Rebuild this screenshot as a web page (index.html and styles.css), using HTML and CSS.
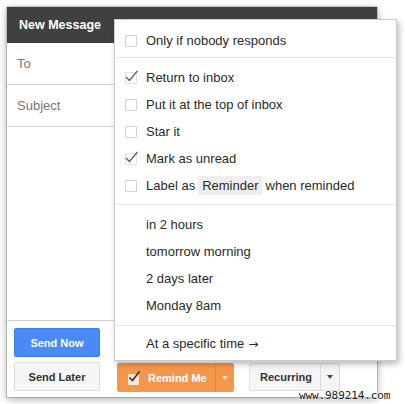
FILE: index.html
```html
<!DOCTYPE html>
<html>
<head>
<meta charset="utf-8">
<link rel="stylesheet" href="styles.css">
</head>
<body>
<div class="page">
  <div class="compose">
    <div class="compose-header">New Message</div>
    <div class="field">To</div>
    <div class="field">Subject</div>
    <div class="compose-body"></div>
    <div class="compose-footer">
      <div class="send-col">
        <div class="btn btn-primary">Send Now</div>
        <div class="btn btn-default">Send Later</div>
      </div>
      <div class="split split-orange">
        <span class="split-main">
          <span class="mini-check">
            <svg width="14" height="14" viewBox="0 0 14 14"><path d="M1.5 7.5 L4.5 10.5 L11.5 1.5" fill="none" stroke="#3d3028" stroke-width="1.7"/></svg>
          </span>
          Remind Me
        </span>
        <span class="split-arrow"><span class="tri tri-light"></span></span>
      </div>
      <div class="split split-gray">
        <span class="split-main">Recurring</span>
        <span class="split-arrow"><span class="tri tri-dark"></span></span>
      </div>
    </div>
  </div>

  <div class="menu">
    <div class="menu-section sec-1">
      <div class="item"><span class="cb"></span>Only if nobody responds</div>
    </div>
    <div class="menu-section sec-2">
      <div class="item"><span class="cb checked"><svg width="14" height="14" viewBox="0 0 14 14"><path d="M1 7 L4.5 10.5 L12.5 0.8" fill="none" stroke="#5a5a5a" stroke-width="1.3"/></svg></span>Return to inbox</div>
      <div class="item"><span class="cb"></span>Put it at the top of inbox</div>
      <div class="item"><span class="cb"></span>Star it</div>
      <div class="item"><span class="cb checked"><svg width="14" height="14" viewBox="0 0 14 14"><path d="M1 7 L4.5 10.5 L12.5 0.8" fill="none" stroke="#5a5a5a" stroke-width="1.3"/></svg></span>Mark as unread</div>
      <div class="item"><span class="cb"></span>Label as<span class="chip">Reminder</span>when reminded</div>
    </div>
    <div class="menu-section sec-3">
      <div class="item plain">in 2 hours</div>
      <div class="item plain">tomorrow morning</div>
      <div class="item plain">2 days later</div>
      <div class="item plain">Monday 8am</div>
    </div>
    <div class="menu-section sec-4">
      <div class="item plain">At a specific time <span class="arrow">→</span></div>
    </div>
  </div>

  <div class="watermark">www.989214.com</div>
</div>
</body>
</html>
```

FILE: styles.css
```css
* { box-sizing: border-box; }

html, body {
  margin: 0;
  padding: 0;
  background: #ffffff;
}

body {
  font-family: "Liberation Sans", Arial, sans-serif;
  font-size: 13px;
  color: #333;
}

.page {
  position: relative;
  width: 405px;
  height: 404px;
  padding: 7px;
  overflow: hidden;
}

.compose {
  width: 370px;
  height: 390px;
  display: flex;
  flex-direction: column;
  background: #fff;
  box-shadow: 0 0 0 1px rgba(0,0,0,0.16), 0 2px 8px rgba(0,0,0,0.35);
}

.compose-header {
  height: 36px;
  flex: none;
  display: flex;
  align-items: center;
  padding-left: 12px;
  background: #404040;
  color: #fff;
  font-weight: bold;
  font-size: 12.5px;
}

.field {
  height: 42px;
  flex: none;
  display: flex;
  align-items: center;
  padding-left: 10px;
  border-bottom: 1px solid #d4d4d4;
  color: #777;
  font-size: 13px;
}

.compose-body {
  flex: 1;
  border-bottom: 1px solid #cfcfcf;
}

.compose-footer {
  height: 76px;
  flex: none;
  display: flex;
  align-items: flex-end;
  padding: 7px 0 5px 7px;
}

.send-col {
  display: flex;
  flex-direction: column;
  gap: 5px;
  width: 86px;
  margin-bottom: 1px;
}

.btn {
  height: 29px;
  display: flex;
  align-items: center;
  justify-content: center;
  border-radius: 2px;
  font-size: 11px;
  font-weight: bold;
}

.btn-primary {
  background: #4a8af4;
  border: 1px solid #3d7de8;
  color: #fff;
}

.btn-default {
  background: #f5f5f5;
  border: 1px solid #dcdcdc;
  color: #333;
}

.split {
  height: 29px;
  display: flex;
  align-items: stretch;
  border-radius: 2px;
  font-size: 11px;
  font-weight: bold;
}

.split-orange {
  width: 117px;
  margin-left: 17px;
  background: #f5974a;
  color: #fff;
}

.split-gray {
  width: 91px;
  margin-left: 15px;
  margin-bottom: 1px;
  height: 28px;
  background: #f5f5f5;
  border: 1px solid #dcdcdc;
  color: #333;
}

.split-main {
  flex: 1;
  display: flex;
  align-items: center;
  padding-left: 11px;
}

.split-gray .split-main {
  padding-left: 10px;
}

.split-arrow {
  width: 19px;
  display: flex;
  align-items: center;
  justify-content: center;
}

.split-orange .split-arrow {
  border-left: 1px solid rgba(160, 80, 20, 0.18);
}

.split-gray .split-arrow {
  border-left: 1px solid #dcdcdc;
}

.tri {
  width: 0;
  height: 0;
  border-left: 3.5px solid transparent;
  border-right: 3.5px solid transparent;
}

.tri-light { border-top: 4px solid #fbe0c8; }
.tri-dark { border-top: 4px solid #444; }

.mini-check {
  position: relative;
  width: 11px;
  height: 11px;
  margin-right: 9px;
  margin-top: 3px;
  background: #fbe6d2;
  border-radius: 1px;
}

.mini-check svg {
  position: absolute;
  left: 0;
  top: -4px;
}

.menu {
  position: absolute;
  left: 114px;
  top: 19px;
  width: 283px;
  background: #fff;
  border: 1px solid #cdcdcd;
  box-shadow: 2px 3px 6px rgba(0,0,0,0.28);
}

.menu-section + .menu-section {
  border-top: 1px solid #e6e6e6;
}

.sec-1 { padding: 7px 0 3px; }
.sec-2 { padding: 6px 0 5px; }
.sec-3 { padding: 6px 0 6px; }
.sec-4 { padding: 4px 0 3px; }

.item {
  height: 27px;
  display: flex;
  align-items: center;
  padding-left: 10px;
  color: #2a2a2a;
  white-space: nowrap;
}

.item.plain {
  padding-left: 31px;
}

.arrow {
  margin-left: 4px;
  font-family: "DejaVu Sans", sans-serif;
  font-size: 12px;
}

.cb {
  position: relative;
  width: 12px;
  height: 12px;
  margin-right: 9px;
  border: 1px solid #d2d2d2;
  border-radius: 1px;
  background: #fff;
  flex: none;
}

.cb.checked {
  border-color: #e2e2e2;
}

.cb.checked svg {
  position: absolute;
  left: -1px;
  top: -3px;
}

.chip {
  display: inline-flex;
  align-items: center;
  height: 19px;
  margin: 0 4px 0 3px;
  padding: 0 3px 0 4px;
  background: #eeeeee;
  border-radius: 1px;
}

.watermark {
  position: absolute;
  left: 299px;
  top: 390px;
  font-family: "DejaVu Sans Mono", "Liberation Mono", monospace;
  font-size: 11px;
  line-height: 12px;
  color: #1a1a1a;
  letter-spacing: -0.1px;
  text-shadow: 0 0 2px #fff, 0 0 2px #fff;
}
```
